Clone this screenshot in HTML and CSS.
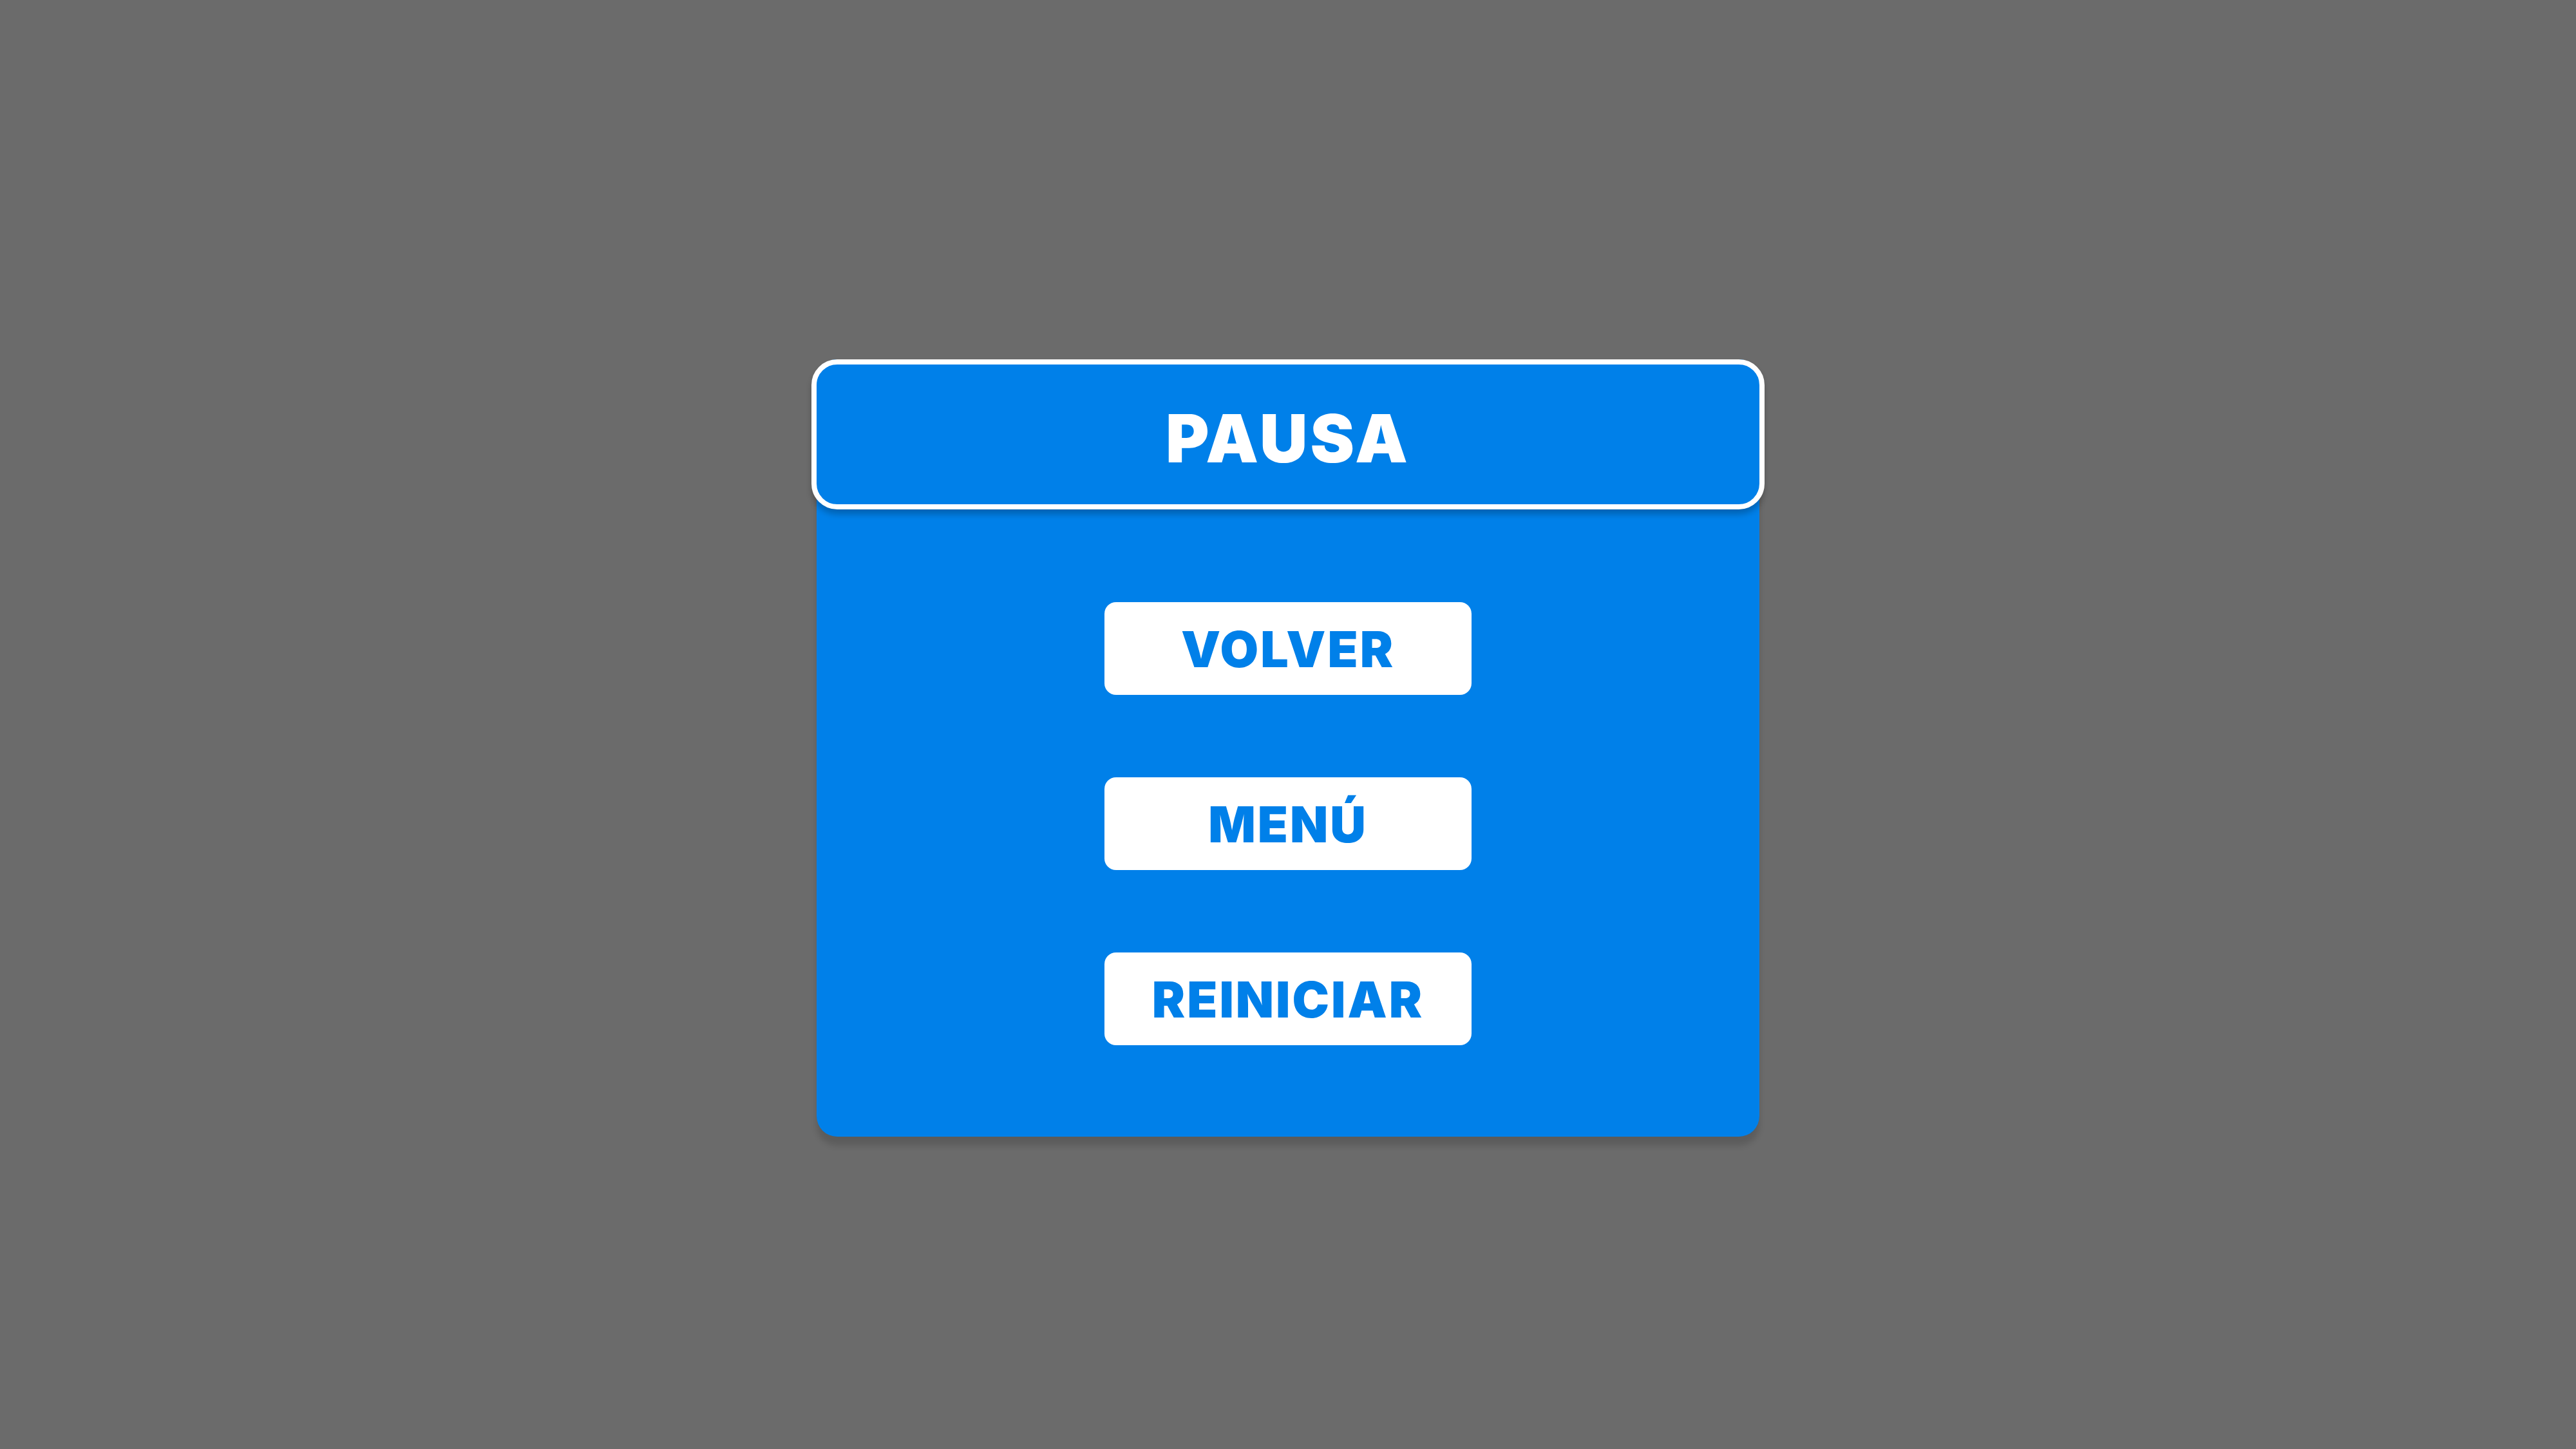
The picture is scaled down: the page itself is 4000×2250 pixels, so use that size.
FILE: index.html
```html
<!DOCTYPE html>
<html lang="es">
<head>
    <meta charset="UTF-8">
    <title>Pausa</title>
    <link rel="stylesheet" href="styles.css">
</head>
<body>
<div id="screen">
    <div id="pause">
        <div class="pause-head">
            <h1>PAUSA</h1>
        </div>
        <ul class="pause-menu">
            <li class="btn">VOLVER</li>
            <li class="btn">MENÚ</li>
            <li class="btn">REINICIAR</li>
        </ul>
    </div>
</div>
</body>
</html>
```

FILE: styles.css
```css
*{
    margin:0;
    padding:0;
    box-sizing: border-box;
}
ul{
    list-style:none;
}
html, body{
    height: 100%;
}
body{
    background: #6b6b6b;
    font-family: Inter, "Liberation Sans", sans-serif;
}
#screen{
    display: flex;
    justify-content: center;
    padding-top: 558px;
}
#pause{
    width: 1464px;
    background: #0080e9;
    border-radius: 32px;
    box-shadow: 0 14px 10px rgba(0,0,0,0.14);
}
.pause-head{
    margin: 0 -8px;
    height: 233px;
    border: 8px solid #ffffff;
    border-radius: 40px;
    background: #0080e9;
    box-shadow: 0 8px 10px rgba(0,0,0,0.22);
    display: flex;
    align-items: center;
    justify-content: center;
    padding-top: 12px;
}
.pause-head h1{
    color: #ffffff;
    font-size: 103px;
    font-weight: 900;
    letter-spacing: 4px;
    line-height: 1;
}
.pause-menu{
    display: flex;
    flex-direction: column;
    align-items: center;
    gap: 128px;
    padding: 144px 0 142px;
}
.btn{
    width: 570px;
    height: 144px;
    background: #ffffff;
    border-radius: 18px;
    color: #0080e9;
    font-size: 77px;
    font-weight: 900;
    letter-spacing: 3px;
    line-height: 1;
    display: flex;
    align-items: center;
    justify-content: center;
    padding-top: 3px;
    cursor: pointer;
}
```
